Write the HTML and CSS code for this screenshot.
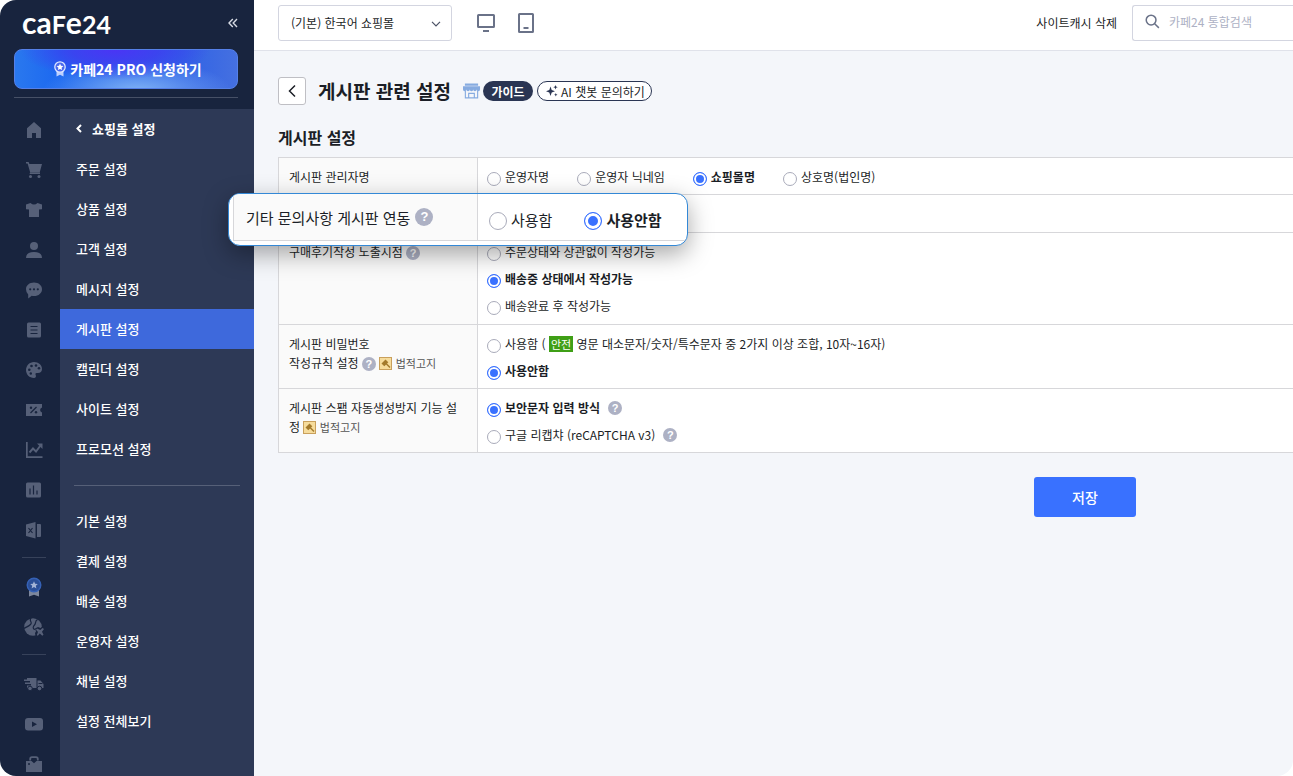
FILE: index.html
```
<!DOCTYPE html>
<html lang="ko">
<head>
    <meta charset="UTF-8">
    <meta name="viewport" content="width=device-width, initial-scale=1.0">
    <title>게시판 관련 설정</title>
    <link rel="stylesheet" href="styles.css">
</head>
<body>
    <div class="page">
        <aside class="sidebar">
            <div class="sidebar-top">
                <div class="brand">
                    <a class="logo" href="#">ca<span class="logo-cap">f</span>e<span class="logo-cap">24</span></a>
                    <button class="fold-button" type="button" aria-label="메뉴 접기">
                        <svg width="10" height="10" viewBox="0 0 10 10" fill="none" stroke="currentColor" stroke-width="1.4"><path d="M4.8 1 1 5l3.8 4M9 1 5.200 5 9 9"/></svg>
                    </button>
                </div>
                <button class="pro-button" type="button">
                    <svg width="12" height="16" viewBox="0 0 12 16"><path d="M2.500 10h7v5.500L6 13.800l-3.500 1.700z" fill="#bcd0ff"/><circle cx="6" cy="6" r="5.200" fill="#4a68ee" stroke="#dfe8ff" stroke-width="1.300"/><path d="m6 2.600 1 2.200 2.400.3-1.800 1.600.5 2.400L6 7.900 3.900 9.100l.5-2.400-1.800-1.600L5 4.800z" fill="#fff"/></svg>
                    카페24 PRO 신청하기
                </button>
            </div>

            <div class="sidebar-body">
                <nav class="rail">
                    <a href="#" aria-label="홈"><svg viewBox="0 0 18 18"><path d="M9 1 2 7.200V16.500q0 .5.5.5H7v-5h4v5h4.500q.5 0 .5-.5V7.200z"/></svg></a>
                    <a href="#" aria-label="주문"><svg viewBox="0 0 18 18"><path d="M1 1h2.600l.8 2H17l-2.300 8.500H5.200L2.600 2.600H1z"/><path d="M5 11.500h10V13H4.600z"/><circle cx="5.500" cy="15.600" r="1.500"/><circle cx="14" cy="15.600" r="1.500"/></svg></a>
                    <a href="#" aria-label="상품"><svg viewBox="0 0 18 18"><path d="M5.500 2q3.500 3 7 0l4.500 1.500v4.800l-3 .3V16H4V8.600l-3-.3V3.500z"/></svg></a>
                    <a href="#" aria-label="고객"><svg viewBox="0 0 18 18"><circle cx="9" cy="5" r="4"/><path d="M1 17q0-6 8-6t8 6z"/></svg></a>
                    <a href="#" aria-label="메시지"><svg viewBox="0 0 18 18"><path d="M9 1.500c4.600 0 8 2.900 8 6.700S13.600 15 9 15q-1.200 0-2.300-.3L3.200 17.500v-4Q1 11.300 1 8.200c0-3.800 3.400-6.700 8-6.700"/><g class="hole"><circle cx="5.200" cy="8.300" r="1.100"/><circle cx="9" cy="8.300" r="1.100"/><circle cx="12.800" cy="8.300" r="1.100"/></g></svg></a>
                    <a href="#" aria-label="게시판"><svg viewBox="0 0 18 18"><rect x="2" y="1.500" width="14" height="15" rx="1.500"/><path class="hole-line" d="M5.500 5.500h7M5.500 9h7M5.500 12.500h7"/></svg></a>
                    <a href="#" aria-label="디자인"><svg viewBox="0 0 18 18"><path d="M9 1c4.600 0 8 3 8 7 0 2.600-1.600 4-4 4h-1.300c-1.500 0-1.500 1.200-1 2 .7 1.400 0 3-1.700 3-4.600 0-8-3.600-8-8s3.600-8 8-8"/><g class="hole"><circle cx="4.300" cy="8.800" r="1.300"/><circle cx="6.500" cy="5" r="1.300"/><circle cx="11" cy="4.500" r="1.300"/><circle cx="14" cy="7.300" r="1.300"/><circle cx="5.800" cy="12.500" r="1.200"/></g></svg></a>
                    <a href="#" aria-label="쿠폰"><svg viewBox="0 0 18 18"><path d="M1 3h16v3.500a2.600 2.600 0 0 0 0 5V15H1z"/><path class="hole-line" d="m5.500 12 6-6"/><g class="hole"><circle cx="6" cy="6.800" r="1.200"/><circle cx="11" cy="11.300" r="1.200"/></g></svg></a>
                    <a href="#" aria-label="분석"><svg viewBox="0 0 18 18"><path d="M1 1h1.700v14.300H17.500V17H1z"/><path d="m4.500 11.500 3.500-4 3 3 4.500-6" fill="none" stroke="currentColor" stroke-width="1.900"/><path d="M12 2.500h5.500V8z"/></svg></a>
                    <a href="#" aria-label="통계"><svg viewBox="0 0 18 18"><rect x="1" y="1.500" width="15" height="15" rx="1.500"/><path class="hole-line" d="M5 7.500v6M8.500 4.500v9M12 9.500v4"/></svg></a>
                    <a href="#" aria-label="엑셀"><svg viewBox="0 0 18 18"><path d="M1 3.500 10.500 1v16.500L1 15zM12 3h3q1 0 1 1v11q0 1-1 1h-3z"/><path class="hole-line" d="m3.500 7 4 5M7.500 7l-4 5"/></svg></a>
                    <hr>
                    <a href="#" aria-label="PRO"><svg class="rail-pro" viewBox="0 0 18 20"><path d="M4 13h10v6.500l-5-1.800-5 1.800z" fill="#7d879c"/><circle cx="9" cy="8" r="6.800" fill="#2b4f97" stroke="#3561b5" stroke-width="1.400"/><path d="m9 4.200 1.100 2.500 2.700.3-2 1.800.6 2.700L9 10.100l-2.400 1.400.6-2.700-2-1.800 2.700-.3z" fill="#a4b4d6"/></svg></a>
                    <a href="#" aria-label="해외"><svg class="rail-wide" viewBox="0 0 20 18"><circle cx="9" cy="9" r="8.800"/><path class="hole-line" d="M7 0C4.500 3 9 4 6.500 6.500S2 9 0 10.500M13.500 1.500c-3 1.500-1 3.500-3 5.500s-1.500 4 .5 4.500"/><path class="hole" d="M11 10.500 14 9l2.500 1L20 7.500V18h-8.500l-.5-3 1-1.500z"/><path d="m13 10.500 3.300 1.600 2.200-2 1.500 1-2 2.600 1.500 3-1.200 1-2.500-2.200-2 2.200-1-.8 1.200-3-2-2.200z"/></svg></a>
                    <hr>
                    <a href="#" aria-label="배송"><svg class="rail-wide" viewBox="0 0 20 18"><path d="M3 3h9.500v10H3v-2.500h4V9H1V7.500h5V6H0V4.500h3zM13.500 5.500h3l3 3.500v4h-6z"/><path class="hole-line" d="M14.500 8.500h4"/><g stroke="#18243e"><circle cx="6" cy="13.500" r="2.300"/><circle cx="15.500" cy="13.500" r="2.300"/></g></svg></a>
                    <a href="#" aria-label="영상"><svg viewBox="0 0 18 18"><rect x="0" y="3" width="18" height="12.500" rx="3"/><path class="hole" d="m7 6.500 5 2.800-5 2.800z"/></svg></a>
                    <a href="#" aria-label="스토어"><svg viewBox="0 0 18 18"><path d="M5.200 5.500V4q0-1.800 1.800-1.800h4q1.800 0 1.800 1.800v1.500" fill="none" stroke="currentColor" stroke-width="1.800"/><path d="M1 6h5.500L9 8.300 11.500 6H17v11H1z"/><circle class="hole" cx="4" cy="9" r="1"/></svg></a>
                </nav>

                <nav class="menu">
                    <a class="menu-back" href="#">
                        <svg width="6" height="9" viewBox="0 0 6 9" fill="none" stroke="currentColor" stroke-width="2"><path d="M5 1 1.500 4.500 5 8"/></svg>
                        쇼핑몰 설정
                    </a>
                    <a href="#">주문 설정</a>
                    <a href="#">상품 설정</a>
                    <a href="#">고객 설정</a>
                    <a href="#">메시지 설정</a>
                    <a class="active" href="#">게시판 설정</a>
                    <a href="#">캘린더 설정</a>
                    <a href="#">사이트 설정</a>
                    <a href="#">프로모션 설정</a>
                    <hr>
                    <a href="#">기본 설정</a>
                    <a href="#">결제 설정</a>
                    <a href="#">배송 설정</a>
                    <a href="#">운영자 설정</a>
                    <a href="#">채널 설정</a>
                    <a href="#">설정 전체보기</a>
                </nav>
            </div>
        </aside>

        <div class="content">
            <header class="topbar">
                <div class="shop-select">
                    <select aria-label="쇼핑몰 선택">
                        <option>(기본) 한국어 쇼핑몰</option>
                    </select>
                    <svg width="10" height="6" viewBox="0 0 10 6" fill="none" stroke="#4b5265" stroke-width="1.200"><path d="m1 .8 4 4 4-4"/></svg>
                </div>
                <button class="device-button" type="button" aria-label="PC">
                    <svg width="20" height="20" viewBox="0 0 20 20" fill="none" stroke="currentColor" stroke-width="2"><rect x="2" y="2" width="16" height="12" rx=".5"/><path d="M7 18h6"/></svg>
                </button>
                <button class="device-button" type="button" aria-label="모바일">
                    <svg width="20" height="20" viewBox="0 0 20 20" fill="none" stroke="currentColor" stroke-width="2"><rect x="3" y="1" width="14" height="18" rx=".5"/><path d="M7.500 15h5"/></svg>
                </button>
                <a class="cache-link" href="#">사이트캐시 삭제</a>
                <div class="search">
                    <svg width="15" height="15" viewBox="0 0 16 16" fill="none" stroke="#6a7288" stroke-width="1.600"><circle cx="6.500" cy="6.500" r="5.200"/><path d="m10.300 10.300 4.500 4.500"/></svg>
                    <input type="text" placeholder="카페24 통합검색" aria-label="카페24 통합검색">
                </div>
            </header>

            <main>
                <div class="title-row">
                    <button class="back-button" type="button" aria-label="뒤로">
                        <svg width="8" height="14" viewBox="0 0 8 14" fill="none" stroke="#1b1e26" stroke-width="1.500"><path d="M7 1.500 1.500 7 7 12.500"/></svg>
                    </button>
                    <h1>게시판 관련 설정</h1>
                    <svg class="store-icon" width="17" height="16" viewBox="0 0 18 16"><path d="M2 0h14v2.500H2zM0 3h18v3H0z" fill="#86abe0"/><path d="M0 5h3.600v1.500a1.800 1.800 0 0 1-3.600 0zM3.600 5h3.600v1.500a1.800 1.800 0 0 1-3.600 0zM7.200 5h3.600v1.500a1.800 1.800 0 0 1-3.600 0zM10.800 5h3.600v1.500a1.800 1.800 0 0 1-3.600 0zM14.400 5H18v1.500a1.800 1.800 0 0 1-3.600 0z" fill="#86abe0"/><path d="M2.500 8v7.300h13V8M6 15v-4.500h6V15" fill="none" stroke="#86abe0" stroke-width="1.200"/></svg>
                    <a class="guide-button" href="#">가이드</a>
                    <a class="chatbot-button" href="#">
                        <svg width="12" height="12" viewBox="0 0 12 12" fill="#2a3553"><path d="M4.500 1.500 5.700 5 9 6.200 5.700 7.400 4.500 11 3.300 7.400 0 6.200 3.300 5zM9.500 0l.6 1.600 1.600.6-1.600.6-.6 1.600-.6-1.600-1.600-.6 1.600-.6zM9.800 8l.5 1.200 1.200.5-1.200.5-.5 1.300-.5-1.300-1.200-.5 1.200-.5z"/></svg>
                        AI 챗봇 문의하기
                    </a>
                </div>

                <h2>게시판 설정</h2>

                <form>
                    <div class="table-wrap">
                        <table class="setting-table">
                            <tr>
                                <th scope="row">게시판 관리자명</th>
                                <td>
                                    <div class="options">
                                        <label><input type="radio" name="manager">운영자명</label>
                                        <label><input type="radio" name="manager">운영자 닉네임</label>
                                        <label><input type="radio" name="manager" checked><strong>쇼핑몰명</strong></label>
                                        <label><input type="radio" name="manager">상호명(법인명)</label>
                                    </div>
                                </td>
                            </tr>
                            <tr class="blank-row">
                                <th></th>
                                <td></td>
                            </tr>
                            <tr class="review-row">
                                <th scope="row">구매후기작성 노출시점 <button class="help" type="button">?</button></th>
                                <td>
                                    <div class="options stacked">
                                        <label><input type="radio" name="review">주문상태와 상관없이 작성가능</label>
                                        <label><input type="radio" name="review" checked><strong>배송중 상태에서 작성가능</strong></label>
                                        <label><input type="radio" name="review">배송완료 후 작성가능</label>
                                    </div>
                                </td>
                            </tr>
                            <tr>
                                <th scope="row">
                                    게시판 비밀번호<br>작성규칙 설정 <button class="help" type="button">?</button>
                                    <svg class="law-icon" width="13" height="13" viewBox="0 0 13 13"><rect x=".5" y=".5" width="12" height="12" fill="#f6dc9c" stroke="#c9a05c"/><path d="m2.500 6.500 4-4 2.800 2.800-4 4z" fill="#a37a2c"/><path d="m7 6.500 4 4" stroke="#a37a2c" stroke-width="1.500"/></svg>
                                    <span class="law-text">법적고지</span>
                                </th>
                                <td>
                                    <div class="options stacked">
                                        <label><input type="radio" name="password"><span>사용함 ( <em class="safe">안전</em> 영문 대소문자/숫자/특수문자 중 2가지 이상 조합, 10자~16자)</span></label>
                                        <label><input type="radio" name="password" checked><strong>사용안함</strong></label>
                                    </div>
                                </td>
                            </tr>
                            <tr>
                                <th scope="row">
                                    게시판 스팸 자동생성방지 기능 설정
                                    <svg class="law-icon" width="13" height="13" viewBox="0 0 13 13"><rect x=".5" y=".5" width="12" height="12" fill="#f6dc9c" stroke="#c9a05c"/><path d="m2.500 6.500 4-4 2.800 2.800-4 4z" fill="#a37a2c"/><path d="m7 6.500 4 4" stroke="#a37a2c" stroke-width="1.500"/></svg>
                                    <span class="law-text">법적고지</span>
                                </th>
                                <td>
                                    <div class="options stacked">
                                        <div class="option-line">
                                            <label><input type="radio" name="spam" checked><strong>보안문자 입력 방식</strong></label>
                                            <button class="help" type="button">?</button>
                                        </div>
                                        <div class="option-line">
                                            <label><input type="radio" name="spam">구글 리캡챠 (reCAPTCHA v3)</label>
                                            <button class="help" type="button">?</button>
                                        </div>
                                    </div>
                                </td>
                            </tr>
                        </table>

                        <!-- enlarged row, floats above the table -->
                        <div class="callout">
                            <div class="callout-label">기타 문의사항 게시판 연동 <button class="help" type="button">?</button></div>
                            <div class="callout-options">
                                <label><input type="radio" name="inquiry">사용함</label>
                                <label><input type="radio" name="inquiry" checked><strong>사용안함</strong></label>
                            </div>
                        </div>
                    </div>

                    <div class="form-footer">
                        <button class="save-button" type="button">저장</button>
                    </div>
                </form>
            </main>
        </div>
    </div>
</body>
</html>
```
FILE: styles.css
```
* {
    box-sizing: border-box;
}

body {
    margin: 0;
    background-color: #fff;
    color: #1b1e26;
    font-family: "Noto Sans CJK KR", sans-serif;
    font-size: 12px;
    line-height: 19px;
}

a {
    color: inherit;
    text-decoration: none;
}

button {
    padding: 0;
    border: none;
    background: none;
    font-family: inherit;
    cursor: pointer;
}

svg {
    flex-shrink: 0;
}

.page {
    display: flex;
    height: 100vh;
    overflow: hidden;
    border-radius: 16px;
    border-top-right-radius: 0;
}

/* Sidebar */
.sidebar {
    display: flex;
    flex-direction: column;
    flex-shrink: 0;
    width: 254px;
    background-color: #18243e;
    color: #fff;
}

.sidebar-top {
    margin: 0 16px 11px 14px;
    padding-bottom: 8px;
    border-bottom: 1px solid #465066;
}

.brand {
    display: flex;
    align-items: center;
    justify-content: space-between;
    height: 49px;
    padding: 0 0 3px 8px;
}

.logo {
    font-family: Lato, sans-serif;
    font-size: 30px;
    font-weight: 700;
    line-height: 40px;
}

.logo-cap {
    font-size: 25px;
    text-transform: uppercase;
}

.fold-button {
    display: flex;
    color: #d5d9e2;
}

.pro-button {
    display: flex;
    align-items: center;
    justify-content: center;
    gap: 4px;
    width: 100%;
    height: 40px;
    padding-left: 4px;
    border: 1px solid #5580e8;
    border-radius: 8px;
    background:
        radial-gradient(ellipse at 45% 0%, #4a35f5 0%, rgba(64, 60, 240, 0.8) 25%, transparent 55%),
        radial-gradient(ellipse at 55% 110%, #82b4f5 0%, transparent 55%),
        linear-gradient(90deg, #2a78ee, #1c68f0 20%, #2f62e6 75%, #4570e0);
    color: #fff;
    font-size: 14px;
    font-weight: 700;
}

.sidebar-body {
    display: flex;
    flex: 1;
    min-height: 0;
}

.rail {
    width: 60px;
    padding-top: 1px;
    color: #566078;
}

.rail a {
    display: flex;
    align-items: center;
    justify-content: center;
    height: 40px;
    padding-left: 8px;
}

.rail svg {
    width: 18px;
    height: 18px;
    fill: currentColor;
}

.rail .rail-wide {
    width: 20px;
}

.rail .rail-pro {
    height: 20px;
}

.rail .hole {
    fill: #18243e;
}

.rail .hole-line {
    fill: none;
    stroke: #18243e;
    stroke-width: 1.2;
}

.rail hr {
    margin: 7px 14px 9px 22px;
    border: none;
    border-top: 1px solid #37425a;
}

.menu {
    flex: 1;
    background-color: #2d3956;
    font-size: 13px;
}

.menu a {
    display: flex;
    align-items: center;
    height: 40px;
    padding: 0 16px 2px;
    font-weight: 500;
}

.menu .menu-back {
    gap: 10px;
    font-weight: 700;
}

.menu .active {
    background-color: #3e69dc;
}

.menu hr {
    margin: 16px 14px 15px;
    border: none;
    border-top: 1px solid #566078;
}

/* Top bar */
.content {
    flex: 1;
    min-width: 0;
    background-color: #f4f6fa;
}

.topbar {
    display: flex;
    align-items: center;
    height: 51px;
    padding: 0 0 5px 24px;
    border-bottom: 1px solid #e0e2ea;
    background-color: #fff;
}

.shop-select {
    position: relative;
    width: 174px;
    margin-right: 14px;
}

.shop-select select {
    width: 100%;
    height: 36px;
    padding: 0 12px;
    border: 1px solid #d3d5e0;
    border-radius: 3px;
    appearance: none;
    background-color: #fff;
    color: #1b1e26;
    font-family: inherit;
    font-size: 12px;
}

.shop-select svg {
    position: absolute;
    top: 16px;
    right: 11px;
    pointer-events: none;
}

.device-button {
    display: flex;
    align-items: center;
    justify-content: center;
    width: 40px;
    height: 36px;
    color: #6a7288;
}

.cache-link {
    margin-left: auto;
}

.search {
    display: flex;
    align-items: center;
    gap: 9px;
    width: 161px;
    height: 36px;
    margin-left: 15px;
    padding: 0 0 2px 12px;
    border: 1px solid #d3d5e0;
    border-right: none;
    border-radius: 3px 0 0 3px;
}

.search input {
    width: 100%;
    min-width: 0;
    padding: 0;
    border: none;
    outline: none;
    font-family: inherit;
    font-size: 12px;
}

.search input::placeholder {
    color: #adb1c4;
}

/* Page title */
main {
    padding: 26px 0 24px 24px;
}

.title-row {
    display: flex;
    align-items: center;
    height: 28px;
}

.back-button {
    display: flex;
    align-items: center;
    justify-content: center;
    width: 28px;
    height: 28px;
    margin-right: 12px;
    border: 1px solid #bfbfc4;
    border-radius: 3px;
    background-color: #fff;
}

h1 {
    margin: 0 12px 0 0;
    font-size: 19px;
    line-height: 28px;
}

.store-icon {
    margin-right: 3px;
}

.guide-button,
.chatbot-button {
    display: flex;
    align-items: center;
    justify-content: center;
    height: 20px;
    border-radius: 10px;
}

.guide-button {
    width: 50px;
    margin-right: 4px;
    background-color: #2a3553;
    color: #fff;
    font-weight: 700;
}

.chatbot-button {
    gap: 3px;
    padding: 0 6px 0 8px;
    border: 1px solid #2a3553;
    background-color: #fff;
}

h2 {
    margin: 20px 0 8px;
    font-size: 16px;
    line-height: 24px;
}

/* Settings table */
.table-wrap {
    position: relative;
}

.setting-table {
    width: 100%;
    border-collapse: collapse;
    background-color: #fff;
}

.setting-table th,
.setting-table td {
    border: 1px solid #d7d7da;
    border-right: none;
    vertical-align: top;
}

.setting-table th {
    width: 199px;
    padding: 9px 16px 6px 10px;
    background-color: #fafafa;
    font-weight: 400;
    text-align: left;
    word-break: break-all;
}

.setting-table td {
    padding: 5px 9px 4px;
}

.blank-row {
    height: 38px;
}

.review-row {
    height: 92px;
}

.options {
    display: flex;
    gap: 28px;
}

.options.stacked {
    flex-direction: column;
    gap: 0;
}

.option-line {
    display: flex;
    align-items: center;
    gap: 8px;
}

label {
    display: flex;
    align-items: center;
    gap: 4px;
    line-height: 27px;
}

input[type="radio"] {
    width: 14px;
    height: 14px;
    margin: 4px 0 0;
    border: 1px solid #a9abba;
    border-radius: 50%;
    appearance: none;
    background-color: #fff;
}

input[type="radio"]:checked {
    border-color: #3971ff;
    background-color: #3971ff;
    box-shadow: inset 0 0 0 2px #fff;
}

.help {
    width: 14px;
    height: 14px;
    border-radius: 50%;
    background-color: #adb1c4;
    color: #fff;
    font-family: "Liberation Sans", sans-serif;
    font-size: 11px;
    font-weight: 700;
    line-height: 14px;
    text-align: center;
}

.law-icon {
    vertical-align: -2px;
}

.law-text {
    color: #555;
    font-size: 11px;
}

.safe {
    display: inline-block;
    padding: 0 2px;
    background-color: #3f9f16;
    color: #fff;
    font-size: 11px;
    font-style: normal;
    line-height: 16px;
}

.callout {
    position: absolute;
    top: 36px;
    left: -50px;
    display: flex;
    width: 460px;
    height: 53px;
    padding: 0 0 4px 4px;
    overflow: hidden;
    border: 1px solid #3388d6;
    border-radius: 12px;
    background-color: #fff;
    box-shadow: 0 8px 24px rgba(0, 0, 0, 0.35);
    font-size: 15px;
}

.callout-label,
.callout-options {
    display: flex;
    align-items: center;
    border-bottom: 1px solid #d7d7da;
    border-left: 1px solid #d7d7da;
}

.callout-label {
    gap: 5px;
    width: 244px;
    padding-left: 12px;
    background-color: #fafafa;
}

.callout-options {
    flex: 1;
    gap: 32px;
    padding: 4px 0 0 11px;
}

.callout input[type="radio"],
.callout .help {
    width: 18px;
    height: 18px;
}

.callout input[type="radio"]:checked {
    box-shadow: inset 0 0 0 3px #fff;
}

.callout .help {
    font-size: 13px;
    line-height: 18px;
}

.form-footer {
    display: flex;
    justify-content: flex-end;
    margin-top: 24px;
    padding-right: 157px;
}

.save-button {
    width: 102px;
    height: 40px;
    border-radius: 3px;
    background-color: #3971ff;
    color: #fff;
    font-size: 14px;
    font-weight: 500;
}
```
